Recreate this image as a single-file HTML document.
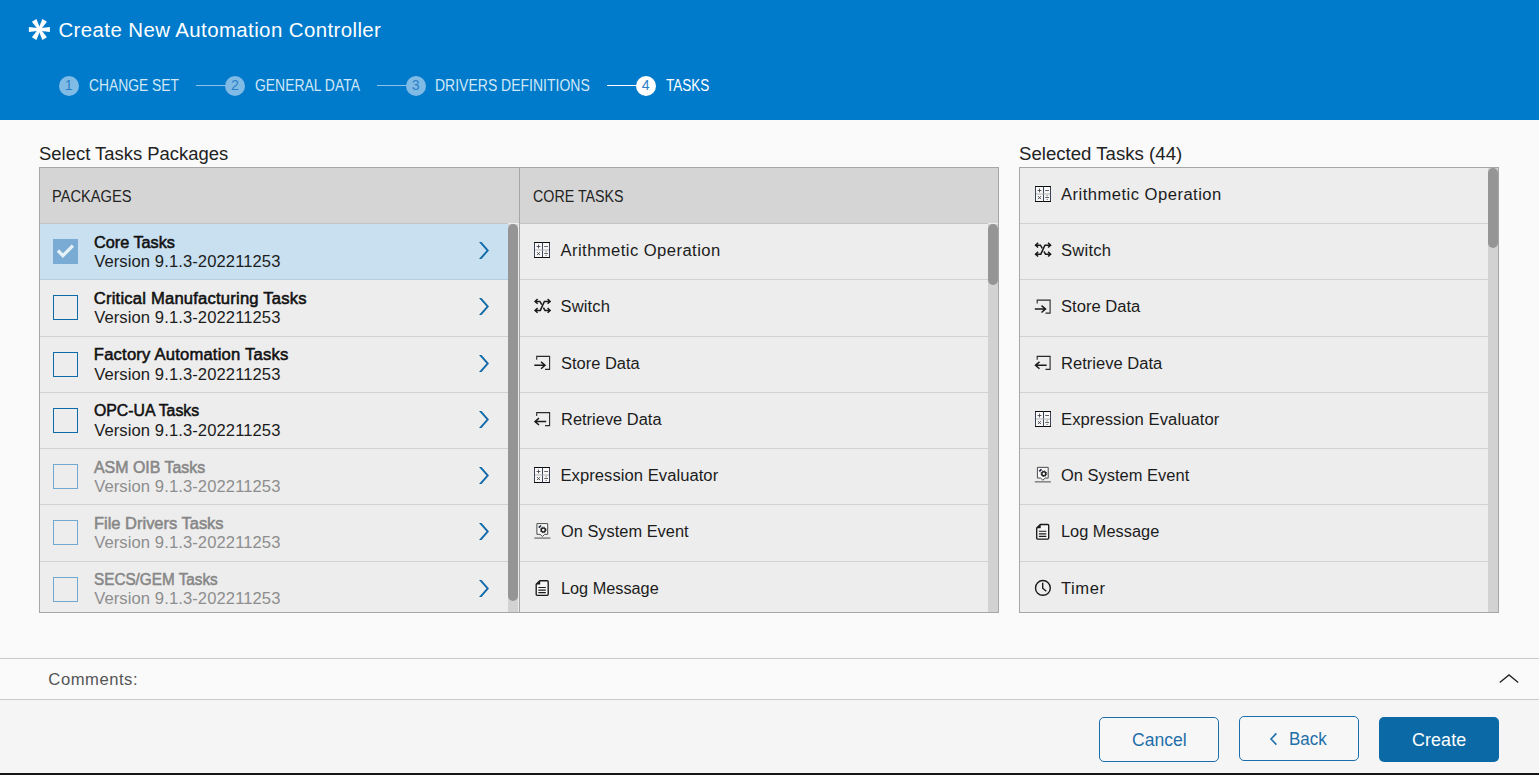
<!DOCTYPE html><html><head><meta charset="utf-8"><title>Create New Automation Controller</title><style>
html,body{margin:0;padding:0}
body{width:1539px;height:775px;overflow:hidden;position:relative;background:#fafafa;font-family:"Liberation Sans", sans-serif;}
.a{position:absolute;display:block}
.t{position:absolute;white-space:nowrap;margin:0;transform-origin:0 0}
.clip{position:absolute;overflow:hidden}

</style></head><body>
<div class="a" style="left:0;top:0;width:1539px;height:120px;background:#007acb"></div>
<svg class="a" style="left:27px;top:17px" width="25" height="25" viewBox="0 0 25 25"><g fill="#fff" transform="translate(12.4 12.5) rotate(90)">
<g id="w"><path d="M-1.2 0L-2.6 -10.5H2.6L1.2 0Z"/></g>
<use href="#w" transform="rotate(60)"/><use href="#w" transform="rotate(120)"/><use href="#w" transform="rotate(180)"/><use href="#w" transform="rotate(240)"/><use href="#w" transform="rotate(300)"/>
<circle r="2.2"/></g></svg>
<div class="a" style="left:58.8px;top:75.8px;width:20px;height:20px;border-radius:50%;background:#80bbe6"></div>
<div class="t" style="left:58.8px;top:75.8px;width:20px;height:20px;line-height:19px;text-align:center;font-size:14.2px;color:#2d80c8">1</div>
<div class="a" style="left:195.9px;top:85px;width:30px;height:1px;background:#8cc3ea"></div>
<div class="a" style="left:224.9px;top:75.8px;width:20px;height:20px;border-radius:50%;background:#80bbe6"></div>
<div class="t" style="left:224.9px;top:75.8px;width:20px;height:20px;line-height:19px;text-align:center;font-size:14.2px;color:#2d80c8">2</div>
<div class="a" style="left:376.6px;top:85px;width:30px;height:1px;background:#8cc3ea"></div>
<div class="a" style="left:405.6px;top:75.8px;width:20px;height:20px;border-radius:50%;background:#80bbe6"></div>
<div class="t" style="left:405.6px;top:75.8px;width:20px;height:20px;line-height:19px;text-align:center;font-size:14.2px;color:#2d80c8">3</div>
<div class="a" style="left:606.6px;top:85px;width:30px;height:1px;background:#ffffff"></div>
<div class="a" style="left:635.6px;top:75.8px;width:20px;height:20px;border-radius:50%;background:#ffffff"></div>
<div class="t" style="left:635.6px;top:75.8px;width:20px;height:20px;line-height:19px;text-align:center;font-size:14.2px;color:#2d80c8">4</div>
<div class="a" style="left:39px;top:167px;width:960px;height:446px;background:#a6a6a6"></div>
<div class="clip" style="left:40px;top:168px;width:479px;height:444px;background:#ededed">
<div class="a" style="left:0;top:0;width:479px;height:55px;background:#d5d5d5"></div>
<div class="a" style="left:0;top:56px;width:468px;height:55px;background:#c8e0f0"></div>
<div class="a" style="left:0;top:55px;width:468px;height:1px;background:#c4c4c4"></div>
<div class="a" style="left:0;top:111px;width:468px;height:1px;background:#b5cfe2"></div>
<div class="a" style="left:0;top:168px;width:468px;height:1px;background:#d2d2d2"></div>
<div class="a" style="left:0;top:224px;width:468px;height:1px;background:#d2d2d2"></div>
<div class="a" style="left:0;top:280px;width:468px;height:1px;background:#d2d2d2"></div>
<div class="a" style="left:0;top:336px;width:468px;height:1px;background:#d2d2d2"></div>
<div class="a" style="left:0;top:393px;width:468px;height:1px;background:#d2d2d2"></div>
<div class="a" style="left:468px;top:56px;width:10px;height:388px;background:#d2d2d2"></div>
<div class="a" style="left:468px;top:56px;width:10px;height:377px;background:#959595;border-radius:5px"></div>
</div>
<div class="clip" style="left:520px;top:168px;width:478px;height:444px;background:#ededed">
<div class="a" style="left:0;top:0;width:478px;height:55px;background:#d5d5d5"></div>
<div class="a" style="left:0;top:55px;width:468px;height:1px;background:#c4c4c4"></div>
<div class="a" style="left:0;top:111px;width:468px;height:1px;background:#d2d2d2"></div>
<div class="a" style="left:0;top:168px;width:468px;height:1px;background:#d2d2d2"></div>
<div class="a" style="left:0;top:224px;width:468px;height:1px;background:#d2d2d2"></div>
<div class="a" style="left:0;top:280px;width:468px;height:1px;background:#d2d2d2"></div>
<div class="a" style="left:0;top:336px;width:468px;height:1px;background:#d2d2d2"></div>
<div class="a" style="left:0;top:393px;width:468px;height:1px;background:#d2d2d2"></div>
<div class="a" style="left:468px;top:56px;width:10px;height:388px;background:#d2d2d2"></div>
<div class="a" style="left:468px;top:56px;width:10px;height:60.5px;background:#959595;border-radius:5px"></div>
</div>
<div class="a" style="left:1019px;top:167px;width:480px;height:446px;background:#a6a6a6"></div>
<div class="clip" style="left:1020px;top:168px;width:478px;height:444px;background:#ededed">
<div class="a" style="left:0;top:55px;width:468px;height:1px;background:#d2d2d2"></div>
<div class="a" style="left:0;top:111px;width:468px;height:1px;background:#d2d2d2"></div>
<div class="a" style="left:0;top:168px;width:468px;height:1px;background:#d2d2d2"></div>
<div class="a" style="left:0;top:224px;width:468px;height:1px;background:#d2d2d2"></div>
<div class="a" style="left:0;top:280px;width:468px;height:1px;background:#d2d2d2"></div>
<div class="a" style="left:0;top:336px;width:468px;height:1px;background:#d2d2d2"></div>
<div class="a" style="left:0;top:393px;width:468px;height:1px;background:#d2d2d2"></div>
<div class="a" style="left:468px;top:0;width:10px;height:444px;background:#d2d2d2"></div>
<div class="a" style="left:468px;top:0;width:10px;height:79.5px;background:#959595;border-radius:5px"></div>
</div>
<div class="a" style="left:53px;top:239.0px;width:25px;height:25px;background:#7aabd4"></div>
<svg class="a" style="left:53px;top:239.0px" width="25" height="25" viewBox="0 0 25 25"><path d="M4.9 11.5L9.9 16.6L19.9 6.6" fill="none" stroke="#e4f2f6" stroke-width="3.3"/></svg>
<svg class="a" style="left:476px;top:239px" width="16" height="24" viewBox="0 0 16 24"><path transform="translate(0 0.5)" d="M3 2.6H5.5L13 11L5.5 19.4H3L10.5 11Z" fill="#0d68a8"/></svg>
<div class="a" style="left:53px;top:295.25px;width:23px;height:23px;border:1px solid #0f6aa8"></div>
<svg class="a" style="left:476px;top:295px" width="16" height="24" viewBox="0 0 16 24"><path transform="translate(0 0.5)" d="M3 2.6H5.5L13 11L5.5 19.4H3L10.5 11Z" fill="#0d68a8"/></svg>
<div class="a" style="left:53px;top:351.5px;width:23px;height:23px;border:1px solid #0f6aa8"></div>
<svg class="a" style="left:476px;top:352px" width="16" height="24" viewBox="0 0 16 24"><path transform="translate(0 0.5)" d="M3 2.6H5.5L13 11L5.5 19.4H3L10.5 11Z" fill="#0d68a8"/></svg>
<div class="a" style="left:53px;top:407.75px;width:23px;height:23px;border:1px solid #0f6aa8"></div>
<svg class="a" style="left:476px;top:408px" width="16" height="24" viewBox="0 0 16 24"><path transform="translate(0 0.5)" d="M3 2.6H5.5L13 11L5.5 19.4H3L10.5 11Z" fill="#0d68a8"/></svg>
<div class="a" style="left:53px;top:464.0px;width:23px;height:23px;border:1px solid #72a9d1"></div>
<svg class="a" style="left:476px;top:464px" width="16" height="24" viewBox="0 0 16 24"><path transform="translate(0 0.5)" d="M3 2.6H5.5L13 11L5.5 19.4H3L10.5 11Z" fill="#0d68a8"/></svg>
<div class="a" style="left:53px;top:520.25px;width:23px;height:23px;border:1px solid #72a9d1"></div>
<svg class="a" style="left:476px;top:520px" width="16" height="24" viewBox="0 0 16 24"><path transform="translate(0 0.5)" d="M3 2.6H5.5L13 11L5.5 19.4H3L10.5 11Z" fill="#0d68a8"/></svg>
<div class="a" style="left:53px;top:576.5px;width:23px;height:23px;border:1px solid #72a9d1"></div>
<svg class="a" style="left:476px;top:577px" width="16" height="24" viewBox="0 0 16 24"><path transform="translate(0 0.5)" d="M3 2.6H5.5L13 11L5.5 19.4H3L10.5 11Z" fill="#0d68a8"/></svg>
<svg class="a" style="left:534px;top:242px" width="18" height="18" viewBox="0 0 18 18"><g transform="translate(0 0)">
<rect x="0.5" y="0.5" width="15" height="15" fill="#f9f9f9" stroke="#3a4256" stroke-width="1"/>
<path d="M0 0.5H16M0 15.5H16" stroke="#0c0c0c" stroke-width="1"/>
<path d="M8.5 0.5V15.5" stroke="#38425a" stroke-width="1"/>
<path d="M1 8H15" stroke="#b0b0b0" stroke-width="1"/>
<path d="M2.6 4.5H6.4M4.5 2.6V6.4" stroke="#4a4a55" stroke-width="0.9"/>
<path d="M10.2 4.5H14" stroke="#555" stroke-width="0.9"/>
<path d="M3 10.1L6 13.1M6 10.1L3 13.1" stroke="#3c3c44" stroke-width="0.9"/>
<path d="M10.2 11.5H14" stroke="#555" stroke-width="0.9"/>
<rect x="11.6" y="9.3" width="1" height="1" fill="#555"/><rect x="11.6" y="12.9" width="1" height="1" fill="#456"/>
</g></svg>
<svg class="a" style="left:534px;top:297px" width="19" height="18" viewBox="0 0 19 18"><g transform="translate(0 0.0)">
<g fill="none" stroke="#1a1a1a" stroke-width="1.5" stroke-linejoin="miter">
<path d="M1 13.4H6.3L10.4 4.4H16"/>
<path d="M1 4.4H5.9L7.8 7.6M9.4 10.7L11 13.4H16"/>
<path d="M3.6 2.1L1.1 4.4L3.6 6.7"/>
<path d="M3.6 11.1L1.1 13.4L3.6 15.7"/>
<path d="M13.6 2.1L16.1 4.4L13.6 6.7"/>
<path d="M13.6 11.1L16.1 13.4L13.6 15.7"/>
</g></g></svg>
<svg class="a" style="left:534px;top:355px" width="19" height="18" viewBox="0 0 19 18"><g transform="translate(0 0.8)">
<g fill="none" stroke="#1a1a1a">
<path d="M2.7 3.9V0.6H15.6V13.6H11" stroke-width="1.1" stroke="#2a2a2a"/>
<g stroke-width="1.5"><path d="M0.3 9.5H11.2M7 6.1L11 9.5L7 12.9"/></g>
</g></g></svg>
<svg class="a" style="left:534px;top:412px" width="19" height="18" viewBox="0 0 19 18"><g transform="translate(0 0.05)">
<g fill="none" stroke="#1a1a1a">
<path d="M2.7 3.9V0.6H15.6V13.6H11" stroke-width="1.1" stroke="#2a2a2a"/>
<g stroke-width="1.5"><path d="M1 9.5H12.2M5 6.1L1 9.5L5 12.9"/></g>
</g></g></svg>
<svg class="a" style="left:534px;top:467px" width="18" height="18" viewBox="0 0 18 18"><g transform="translate(0 0)">
<rect x="0.5" y="0.5" width="15" height="15" fill="#f9f9f9" stroke="#3a4256" stroke-width="1"/>
<path d="M0 0.5H16M0 15.5H16" stroke="#0c0c0c" stroke-width="1"/>
<path d="M8.5 0.5V15.5" stroke="#38425a" stroke-width="1"/>
<path d="M1 8H15" stroke="#b0b0b0" stroke-width="1"/>
<path d="M2.6 4.5H6.4M4.5 2.6V6.4" stroke="#4a4a55" stroke-width="0.9"/>
<path d="M10.2 4.5H14" stroke="#555" stroke-width="0.9"/>
<path d="M3 10.1L6 13.1M6 10.1L3 13.1" stroke="#3c3c44" stroke-width="0.9"/>
<path d="M10.2 11.5H14" stroke="#555" stroke-width="0.9"/>
<rect x="11.6" y="9.3" width="1" height="1" fill="#555"/><rect x="11.6" y="12.9" width="1" height="1" fill="#456"/>
</g></svg>
<svg class="a" style="left:534px;top:523px" width="19" height="18" viewBox="0 0 19 18"><g transform="translate(0 0.0)">
<path d="M2.9 0.6H13.7V11.3H10.7L8.4 13.5L6.1 11.3H2.9Z" fill="#f9f9f9" stroke="#4a4a4a" stroke-width="1"/>
<circle cx="9.3" cy="6.9" r="2" fill="none" stroke="#222" stroke-width="1.5"/>
<circle cx="9.3" cy="6.9" r="2.9" fill="none" stroke="#222" stroke-width="0.9" stroke-dasharray="1.1 1.2"/>
<path d="M4.8 4.6L7 2.5" stroke="#1d2440" stroke-width="1.7"/>
<path d="M0.3 15.1H16.4" stroke="#707070" stroke-width="1.3"/>
</g></svg>
<svg class="a" style="left:534px;top:579px" width="17" height="19" viewBox="0 0 17 19"><g transform="translate(0.6 0.8)">
<path d="M5.2 0.9H12.6Q13.6 0.9 13.6 1.9V14.5Q13.6 15.5 12.6 15.5H2.6Q1.6 15.5 1.6 14.5V4.4Z" fill="#f6f6f6" stroke="#1a1a1a" stroke-width="1.35" stroke-linejoin="round"/>
<path d="M5.6 0.9V4.8H1.6Z" fill="#1a1a1a"/>
<path d="M3.8 7.7H11.2M3.8 10.3H11.2M3.8 12.9H11.2" stroke="#1a1a1a" stroke-width="1.2"/>
</g></svg>
<svg class="a" style="left:1035px;top:186px" width="18" height="18" viewBox="0 0 18 18"><g transform="translate(0 0)">
<rect x="0.5" y="0.5" width="15" height="15" fill="#f9f9f9" stroke="#3a4256" stroke-width="1"/>
<path d="M0 0.5H16M0 15.5H16" stroke="#0c0c0c" stroke-width="1"/>
<path d="M8.5 0.5V15.5" stroke="#38425a" stroke-width="1"/>
<path d="M1 8H15" stroke="#b0b0b0" stroke-width="1"/>
<path d="M2.6 4.5H6.4M4.5 2.6V6.4" stroke="#4a4a55" stroke-width="0.9"/>
<path d="M10.2 4.5H14" stroke="#555" stroke-width="0.9"/>
<path d="M3 10.1L6 13.1M6 10.1L3 13.1" stroke="#3c3c44" stroke-width="0.9"/>
<path d="M10.2 11.5H14" stroke="#555" stroke-width="0.9"/>
<rect x="11.6" y="9.3" width="1" height="1" fill="#555"/><rect x="11.6" y="12.9" width="1" height="1" fill="#456"/>
</g></svg>
<svg class="a" style="left:1034px;top:240px" width="19" height="18" viewBox="0 0 19 18"><g transform="translate(0.5 0.75)">
<g fill="none" stroke="#1a1a1a" stroke-width="1.5" stroke-linejoin="miter">
<path d="M1 13.4H6.3L10.4 4.4H16"/>
<path d="M1 4.4H5.9L7.8 7.6M9.4 10.7L11 13.4H16"/>
<path d="M3.6 2.1L1.1 4.4L3.6 6.7"/>
<path d="M3.6 11.1L1.1 13.4L3.6 15.7"/>
<path d="M13.6 2.1L16.1 4.4L13.6 6.7"/>
<path d="M13.6 11.1L16.1 13.4L13.6 15.7"/>
</g></g></svg>
<svg class="a" style="left:1034px;top:299px" width="19" height="18" viewBox="0 0 19 18"><g transform="translate(0.5 0.55)">
<g fill="none" stroke="#1a1a1a">
<path d="M2.7 3.9V0.6H15.6V13.6H11" stroke-width="1.1" stroke="#2a2a2a"/>
<g stroke-width="1.5"><path d="M0.3 9.5H11.2M7 6.1L11 9.5L7 12.9"/></g>
</g></g></svg>
<svg class="a" style="left:1034px;top:355px" width="19" height="18" viewBox="0 0 19 18"><g transform="translate(0.5 0.8)">
<g fill="none" stroke="#1a1a1a">
<path d="M2.7 3.9V0.6H15.6V13.6H11" stroke-width="1.1" stroke="#2a2a2a"/>
<g stroke-width="1.5"><path d="M1 9.5H12.2M5 6.1L1 9.5L5 12.9"/></g>
</g></g></svg>
<svg class="a" style="left:1035px;top:411px" width="18" height="18" viewBox="0 0 18 18"><g transform="translate(0 0)">
<rect x="0.5" y="0.5" width="15" height="15" fill="#f9f9f9" stroke="#3a4256" stroke-width="1"/>
<path d="M0 0.5H16M0 15.5H16" stroke="#0c0c0c" stroke-width="1"/>
<path d="M8.5 0.5V15.5" stroke="#38425a" stroke-width="1"/>
<path d="M1 8H15" stroke="#b0b0b0" stroke-width="1"/>
<path d="M2.6 4.5H6.4M4.5 2.6V6.4" stroke="#4a4a55" stroke-width="0.9"/>
<path d="M10.2 4.5H14" stroke="#555" stroke-width="0.9"/>
<path d="M3 10.1L6 13.1M6 10.1L3 13.1" stroke="#3c3c44" stroke-width="0.9"/>
<path d="M10.2 11.5H14" stroke="#555" stroke-width="0.9"/>
<rect x="11.6" y="9.3" width="1" height="1" fill="#555"/><rect x="11.6" y="12.9" width="1" height="1" fill="#456"/>
</g></svg>
<svg class="a" style="left:1034px;top:466px" width="19" height="18" viewBox="0 0 19 18"><g transform="translate(0.5 0.75)">
<path d="M2.9 0.6H13.7V11.3H10.7L8.4 13.5L6.1 11.3H2.9Z" fill="#f9f9f9" stroke="#4a4a4a" stroke-width="1"/>
<circle cx="9.3" cy="6.9" r="2" fill="none" stroke="#222" stroke-width="1.5"/>
<circle cx="9.3" cy="6.9" r="2.9" fill="none" stroke="#222" stroke-width="0.9" stroke-dasharray="1.1 1.2"/>
<path d="M4.8 4.6L7 2.5" stroke="#1d2440" stroke-width="1.7"/>
<path d="M0.3 15.1H16.4" stroke="#707070" stroke-width="1.3"/>
</g></svg>
<svg class="a" style="left:1035px;top:523px" width="17" height="19" viewBox="0 0 17 19"><g transform="translate(0.1 0.55)">
<path d="M5.2 0.9H12.6Q13.6 0.9 13.6 1.9V14.5Q13.6 15.5 12.6 15.5H2.6Q1.6 15.5 1.6 14.5V4.4Z" fill="#f6f6f6" stroke="#1a1a1a" stroke-width="1.35" stroke-linejoin="round"/>
<path d="M5.6 0.9V4.8H1.6Z" fill="#1a1a1a"/>
<path d="M3.8 7.7H11.2M3.8 10.3H11.2M3.8 12.9H11.2" stroke="#1a1a1a" stroke-width="1.2"/>
</g></svg>
<svg class="a" style="left:1034px;top:579px" width="19" height="19" viewBox="0 0 19 19"><g transform="translate(0.1 0.0)">
<circle cx="8.8" cy="8.9" r="7.4" fill="none" stroke="#1a1a1a" stroke-width="1.4"/>
<path d="M8.6 3.8V9.2L12.2 12.2" fill="none" stroke="#1a1a1a" stroke-width="1.4"/>
</g></svg>
<div class="a" style="left:0;top:613px;width:1539px;height:45px;background:#fafafa"></div>
<div class="a" style="left:39px;top:612px;width:960px;height:1px;background:#a6a6a6"></div>
<div class="a" style="left:1019px;top:612px;width:480px;height:1px;background:#a6a6a6"></div>
<div class="a" style="left:0;top:658px;width:1539px;height:1px;background:#c9c9c9"></div>
<div class="a" style="left:0;top:659px;width:1539px;height:40px;background:#fafafa"></div>
<div class="a" style="left:0;top:699px;width:1539px;height:1px;background:#c9c9c9"></div>
<svg class="a" style="left:1497px;top:670px" width="24" height="16" viewBox="0 0 24 16"><path d="M2.8 12.4L12 4.9L21.2 12.4" fill="none" stroke="#222" stroke-width="1.3"/></svg>
<div class="a" style="left:0;top:700px;width:1539px;height:73px;background:#f5f5f5"></div>
<div class="a" style="left:0;top:773px;width:1539px;height:2px;background:#161616"></div>
<div class="a" style="left:1099px;top:717px;width:118px;height:43px;border:1px solid #1b6eab;border-radius:5px;background:#f7f7f7"></div>
<div class="a" style="left:1239px;top:716px;width:118px;height:43px;border:1px solid #1b6eab;border-radius:5px;background:#f7f7f7"></div>
<div class="a" style="left:1379px;top:717px;width:120px;height:45px;border-radius:5px;background:#0b69a5"></div>
<svg class="a" style="left:1267px;top:730px" width="14" height="18" viewBox="0 0 14 18"><path d="M9.4 3.4L4 9L9.4 14.6" fill="none" stroke="#1f6fa9" stroke-width="1.6"/></svg>
<div class="t" id="t0" style="left:58.46px;top:20.00px;font-size:20.44px;line-height:20.44px;font-weight:400;color:#ffffff;letter-spacing:0.398px">Create New Automation Controller</div>
<div class="t" id="t1" style="left:88.90px;top:78.00px;font-size:15.57px;line-height:15.57px;font-weight:400;color:#d0e8f7;transform:scaleX(0.8898)">CHANGE SET</div>
<div class="t" id="t2" style="left:254.50px;top:78.00px;font-size:15.57px;line-height:15.57px;font-weight:400;color:#d0e8f7;transform:scaleX(0.8943)">GENERAL DATA</div>
<div class="t" id="t3" style="left:435.05px;top:78.00px;font-size:15.57px;line-height:15.57px;font-weight:400;color:#d0e8f7;transform:scaleX(0.8995)">DRIVERS DEFINITIONS</div>
<div class="t" id="t4" style="left:665.50px;top:78.00px;font-size:15.57px;line-height:15.57px;font-weight:400;color:#ffffff;transform:scaleX(0.8687)">TASKS</div>
<div class="t" id="t5" style="left:38.76px;top:143.50px;font-size:19.16px;line-height:19.16px;font-weight:400;color:#222222;transform:scaleX(0.9627)">Select Tasks Packages</div>
<div class="t" id="t6" style="left:1018.75px;top:143.50px;font-size:19.16px;line-height:19.16px;font-weight:400;color:#222222;transform:scaleX(0.9721)">Selected Tasks (44)</div>
<div class="t" id="t7" style="left:52.30px;top:189.00px;font-size:16.87px;line-height:16.87px;font-weight:400;color:#222222;transform:scaleX(0.8695)">PACKAGES</div>
<div class="t" id="t8" style="left:533.28px;top:189.00px;font-size:16.87px;line-height:16.87px;font-weight:400;color:#222222;transform:scaleX(0.8455)">CORE TASKS</div>
<div class="t" id="t9" style="left:93.82px;top:235.00px;font-size:16.61px;line-height:16.61px;font-weight:400;color:#111111;-webkit-text-stroke:0.55px currentColor;transform:scaleX(0.9781)">Core Tasks</div>
<div class="t" id="t10" style="left:94.20px;top:254.00px;font-size:16.61px;line-height:16.61px;font-weight:400;color:#1c1c1c;letter-spacing:0.084px">Version 9.1.3-202211253</div>
<div class="t" id="t11" style="left:93.80px;top:291.00px;font-size:16.61px;line-height:16.61px;font-weight:400;color:#111111;-webkit-text-stroke:0.55px currentColor;letter-spacing:0.197px">Critical Manufacturing Tasks</div>
<div class="t" id="t12" style="left:94.20px;top:310.00px;font-size:16.61px;line-height:16.61px;font-weight:400;color:#1c1c1c;letter-spacing:0.084px">Version 9.1.3-202211253</div>
<div class="t" id="t13" style="left:93.80px;top:347.00px;font-size:16.61px;line-height:16.61px;font-weight:400;color:#111111;-webkit-text-stroke:0.55px currentColor;letter-spacing:0.197px">Factory Automation Tasks</div>
<div class="t" id="t14" style="left:94.20px;top:367.00px;font-size:16.61px;line-height:16.61px;font-weight:400;color:#1c1c1c;letter-spacing:0.084px">Version 9.1.3-202211253</div>
<div class="t" id="t15" style="left:93.84px;top:403.00px;font-size:16.61px;line-height:16.61px;font-weight:400;color:#111111;-webkit-text-stroke:0.55px currentColor;transform:scaleX(0.9518)">OPC-UA Tasks</div>
<div class="t" id="t16" style="left:94.20px;top:423.00px;font-size:16.61px;line-height:16.61px;font-weight:400;color:#1c1c1c;letter-spacing:0.084px">Version 9.1.3-202211253</div>
<div class="t" id="t17" style="left:93.80px;top:460.00px;font-size:16.61px;line-height:16.61px;font-weight:400;color:#878787;-webkit-text-stroke:0.55px currentColor;transform:scaleX(0.9584)">ASM OIB Tasks</div>
<div class="t" id="t18" style="left:94.20px;top:479.00px;font-size:16.61px;line-height:16.61px;font-weight:400;color:#8e8e8e;letter-spacing:0.084px">Version 9.1.3-202211253</div>
<div class="t" id="t19" style="left:93.81px;top:516.00px;font-size:16.61px;line-height:16.61px;font-weight:400;color:#878787;-webkit-text-stroke:0.55px currentColor;transform:scaleX(0.9911)">File Drivers Tasks</div>
<div class="t" id="t20" style="left:94.20px;top:535.00px;font-size:16.61px;line-height:16.61px;font-weight:400;color:#8e8e8e;letter-spacing:0.084px">Version 9.1.3-202211253</div>
<div class="t" id="t21" style="left:93.86px;top:572.00px;font-size:16.61px;line-height:16.61px;font-weight:400;color:#878787;-webkit-text-stroke:0.55px currentColor;transform:scaleX(0.9200)">SECS/GEM Tasks</div>
<div class="t" id="t22" style="left:94.20px;top:591.00px;font-size:16.61px;line-height:16.61px;font-weight:400;color:#8e8e8e;letter-spacing:0.084px">Version 9.1.3-202211253</div>
<div class="t" id="t23" style="left:560.50px;top:243.00px;font-size:16.61px;line-height:16.61px;font-weight:400;color:#1c1c1c;letter-spacing:0.436px">Arithmetic Operation</div>
<div class="t" id="t24" style="left:560.50px;top:299.00px;font-size:16.61px;line-height:16.61px;font-weight:400;color:#1c1c1c;letter-spacing:0.091px">Switch</div>
<div class="t" id="t25" style="left:560.51px;top:355.50px;font-size:16.61px;line-height:16.61px;font-weight:400;color:#1c1c1c;transform:scaleX(0.9910)">Store Data</div>
<div class="t" id="t26" style="left:560.51px;top:411.50px;font-size:16.61px;line-height:16.61px;font-weight:400;color:#1c1c1c;transform:scaleX(0.9905)">Retrieve Data</div>
<div class="t" id="t27" style="left:560.50px;top:468.00px;font-size:16.61px;line-height:16.61px;font-weight:400;color:#1c1c1c;letter-spacing:0.038px">Expression Evaluator</div>
<div class="t" id="t28" style="left:560.51px;top:524.00px;font-size:16.61px;line-height:16.61px;font-weight:400;color:#1c1c1c;transform:scaleX(0.9874)">On System Event</div>
<div class="t" id="t29" style="left:560.53px;top:580.50px;font-size:16.61px;line-height:16.61px;font-weight:400;color:#1c1c1c;transform:scaleX(0.9796)">Log Message</div>
<div class="t" id="t30" style="left:1061.00px;top:186.50px;font-size:16.61px;line-height:16.61px;font-weight:400;color:#1c1c1c;letter-spacing:0.468px">Arithmetic Operation</div>
<div class="t" id="t31" style="left:1061.00px;top:243.00px;font-size:16.61px;line-height:16.61px;font-weight:400;color:#1c1c1c;letter-spacing:0.211px">Switch</div>
<div class="t" id="t32" style="left:1061.00px;top:299.00px;font-size:16.61px;line-height:16.61px;font-weight:400;color:#1c1c1c;transform:scaleX(0.9986)">Store Data</div>
<div class="t" id="t33" style="left:1061.00px;top:355.50px;font-size:16.61px;line-height:16.61px;font-weight:400;color:#1c1c1c;transform:scaleX(0.9965)">Retrieve Data</div>
<div class="t" id="t34" style="left:1061.00px;top:411.50px;font-size:16.61px;line-height:16.61px;font-weight:400;color:#1c1c1c;letter-spacing:0.070px">Expression Evaluator</div>
<div class="t" id="t35" style="left:1061.01px;top:468.00px;font-size:16.61px;line-height:16.61px;font-weight:400;color:#1c1c1c;transform:scaleX(0.9921)">On System Event</div>
<div class="t" id="t36" style="left:1061.02px;top:524.00px;font-size:16.61px;line-height:16.61px;font-weight:400;color:#1c1c1c;transform:scaleX(0.9857)">Log Message</div>
<div class="t" id="t37" style="left:1061.00px;top:580.50px;font-size:16.61px;line-height:16.61px;font-weight:400;color:#1c1c1c;letter-spacing:0.562px">Timer</div>
<div class="t" id="t38" style="left:48.36px;top:672.00px;font-size:16.61px;line-height:16.61px;font-weight:400;color:#555555;letter-spacing:0.530px">Comments:</div>
<div class="t" id="t39" style="left:1131.91px;top:732.00px;font-size:17.89px;line-height:17.89px;font-weight:400;color:#1f6fa9;transform:scaleX(0.9822)">Cancel</div>
<div class="t" id="t40" style="left:1289.01px;top:731.00px;font-size:17.89px;line-height:17.89px;font-weight:400;color:#1f6fa9;transform:scaleX(0.9502)">Back</div>
<div class="t" id="t41" style="left:1411.89px;top:732.00px;font-size:17.89px;line-height:17.89px;font-weight:400;color:#ffffff;letter-spacing:0.129px">Create</div>
</body></html>
